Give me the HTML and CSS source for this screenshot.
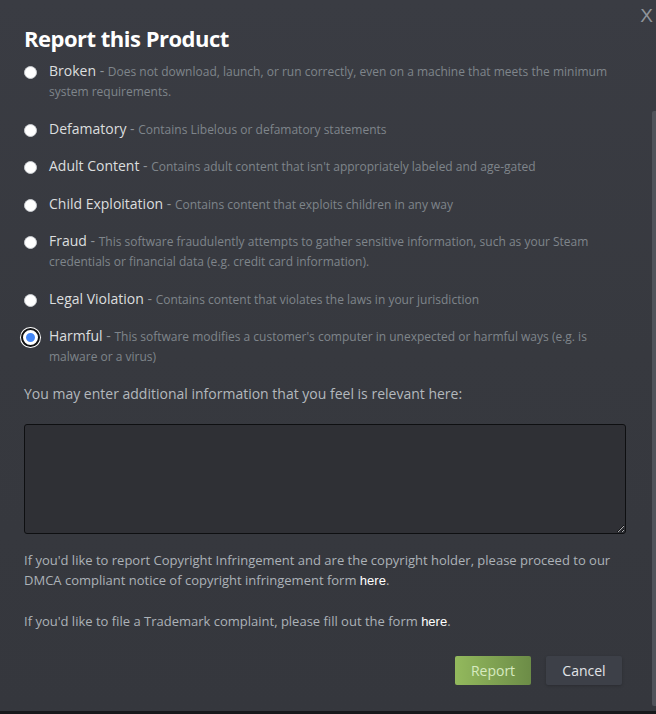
FILE: index.html
```html
<!DOCTYPE html>
<html lang="en">
<head>
<meta charset="utf-8">
<title>Report this Product</title>
<link rel="stylesheet" href="styles.css">
</head>
<body>
<div class="modal">
  <div class="close">X</div>
  <div class="scrollbar"></div>
  <h1 class="title">Report this Product</h1>
  <div class="options">
    <label class="option"><input type="radio" name="r" class="radio"><span class="text"><span class="name">Broken</span> - <span class="desc">Does not download, launch, or run correctly, even on a machine that meets the minimum system requirements.</span></span></label>
    <label class="option"><input type="radio" name="r" class="radio"><span class="text"><span class="name">Defamatory</span> - <span class="desc">Contains Libelous or defamatory statements</span></span></label>
    <label class="option"><input type="radio" name="r" class="radio"><span class="text"><span class="name">Adult Content</span> - <span class="desc">Contains adult content that isn't appropriately labeled and age-gated</span></span></label>
    <label class="option"><input type="radio" name="r" class="radio"><span class="text"><span class="name">Child Exploitation</span> - <span class="desc">Contains content that exploits children in any way</span></span></label>
    <label class="option"><input type="radio" name="r" class="radio"><span class="text"><span class="name">Fraud</span> - <span class="desc">This software fraudulently attempts to gather sensitive information, such as your Steam credentials or financial data (e.g. credit card information).</span></span></label>
    <label class="option"><input type="radio" name="r" class="radio"><span class="text"><span class="name">Legal Violation</span> - <span class="desc">Contains content that violates the laws in your jurisdiction</span></span></label>
    <label class="option"><input type="radio" name="r" class="radio focused" checked><span class="text"><span class="name">Harmful</span> - <span class="desc">This software modifies a customer's computer in unexpected or harmful ways (e.g. is malware or a virus)</span></span></label>
  </div>
  <p class="prompt">You may enter additional information that you feel is relevant here:</p>
  <textarea class="info"></textarea>
  <p class="note">If you'd like to report Copyright Infringement and are the copyright holder, please proceed to our DMCA compliant notice of copyright infringement form <a class="link" href="#">here</a>.</p>
  <p class="note tm">If you'd like to file a Trademark complaint, please fill out the form <a class="link" href="#">here</a>.</p>
  <div class="buttons">
    <button class="btn report">Report</button>
    <button class="btn cancel">Cancel</button>
  </div>
</div>
</body>
</html>
```
FILE: styles.css
```css
html, body {
  margin: 0;
  padding: 0;
  background: #17181b;
}
body {
  width: 656px;
  height: 714px;
  overflow: hidden;
  font-family: "Open Sans", "Noto Sans", sans-serif;
}
.modal {
  position: relative;
  box-sizing: border-box;
  height: 711px;
  padding: 24px 30px 0 24px;
  background: linear-gradient(to bottom, #3a3c43 0%, #37393f 50%, #35373d 100%);
  color: #acb2b8;
}
.close {
  position: absolute;
  top: 6px;
  right: 3px;
  font-family: "Liberation Sans", sans-serif;
  font-size: 19px;
  color: #8f949a;
  line-height: 20px;
}
.scrollbar {
  position: absolute;
  right: 0;
  top: 111px;
  width: 4px;
  height: 595px;
  background: #50535a;
  border-radius: 2px 0 0 2px;
}
.title {
  margin: 0 0 9px 0;
  font-size: 22px;
  line-height: 28px;
  font-weight: 700;
  color: #ffffff;
  letter-spacing: -0.5px;
}
.options {
  display: flex;
  flex-direction: column;
  gap: 17.5px;
}
.option {
  display: flex;
  align-items: flex-start;
  gap: 12px;
  line-height: 20px;
}
.radio {
  appearance: none;
  -webkit-appearance: none;
  flex: none;
  width: 13px;
  height: 13px;
  margin: 5px 0 0 0;
  border-radius: 50%;
  background: #ffffff;
  border: 1px solid #c9ccd0;
  box-sizing: border-box;
}
.radio:checked {
  background: #4285f4;
  border: 2px solid #ffffff;
  box-shadow: 0 0 0 1px #3e7be8;
}
.radio.focused {
  outline: 2px solid #111214;
  outline-offset: 1px;
  box-shadow: 0 0 0 1px #ffffff, 0 0 0 4px #ffffff;
}
.text {
  font-size: 14px;
  line-height: 20px;
  color: #8f949a;
}
.name {
  color: #dcdedf;
}
.desc {
  font-size: 12px;
  line-height: 14px;
  color: #7f858b;
}
.prompt {
  margin: 18px 0 0 0;
  font-size: 14px;
  line-height: 20px;
  color: #b3b8bd;
}
.info {
  display: block;
  box-sizing: border-box;
  width: 602px;
  height: 110px;
  margin: 20px 0 0 0;
  background: #2f3035;
  border: 1px solid #0e0f11;
  border-radius: 3px;
  color: #dcdedf;
  resize: vertical;
}
.note {
  margin: 16px 0 0 0;
  font-size: 13px;
  line-height: 20px;
  color: #acb2b8;
}
.note.tm {
  margin-top: 21px;
}
.link {
  font-family: "Liberation Sans", sans-serif;
  line-height: 16px;
  color: #ffffff;
  text-decoration: none;
}
.buttons {
  display: flex;
  justify-content: flex-end;
  gap: 15px;
  margin: 25px 4px 0 0;
}
.btn {
  width: 76px;
  height: 29px;
  border: none;
  border-radius: 2px;
  font-family: "Open Sans", "Noto Sans", sans-serif;
  font-size: 14px;
  padding: 0;
}
.report {
  background: linear-gradient(to right, #93b95d 0%, #6c8c47 100%);
  color: #d7eac0;
}
.cancel {
  background: #3d4048;
  color: #e1e4e7;
  box-shadow: 0 1px 3px rgba(0, 0, 0, 0.2);
}
```
